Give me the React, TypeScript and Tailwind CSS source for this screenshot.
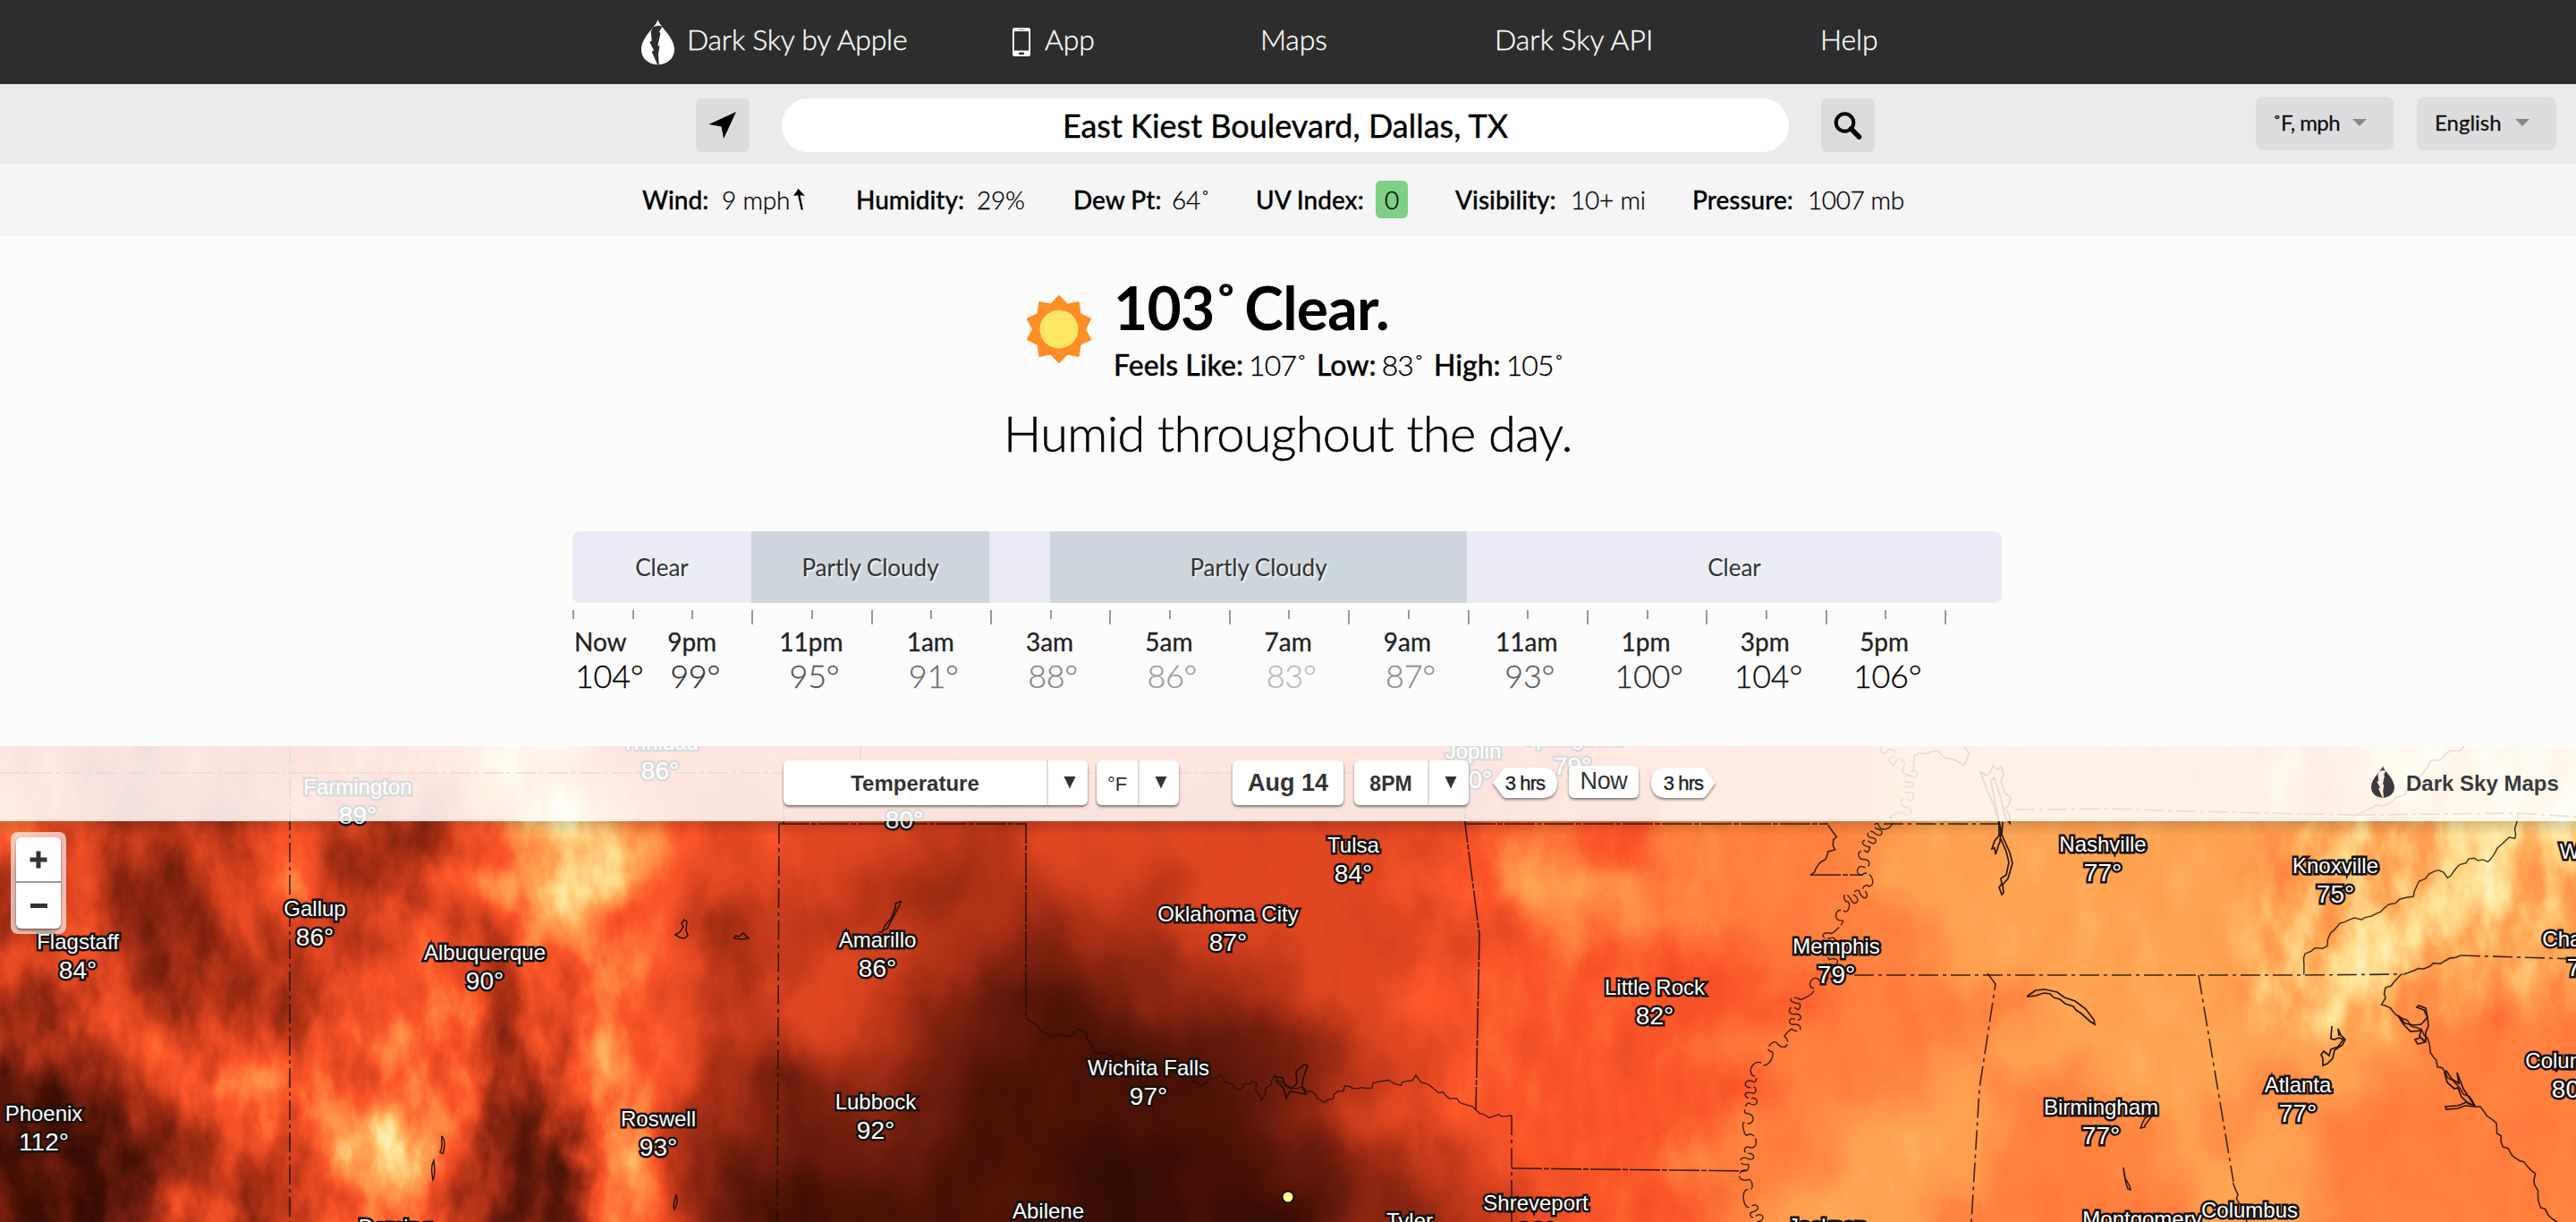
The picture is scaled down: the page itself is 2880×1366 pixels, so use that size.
import React from "react";

const CELL_W = 60;
const CELL_H = 44.4;
const MAP_TOP = 834;

// Temperature field: one character per cell, 0 (hottest) to 9 (coolest).
const FIELD = [
  "654655667986666" + "666666666666" + "66677777888" + "8888889999",
  "754446556897655" + "555455555555" + "56667777888" + "8888888999",
  "654456334699656" + "554455555555" + "67667777888" + "8888888899",
  "353357436899555" + "543445455556" + "68877777888" + "8888888998",
  "462345465586634" + "444434455555" + "56777777788" + "8888889988",
  "563344565467644" + "554323344555" + "66666677788" + "8888899888",
  "356334556466545" + "543212334556" + "66666667777" + "8888898777",
  "435655676357644" + "542211122355" + "66666777778" + "8888888777",
  "124586567357642" + "332111112345" + "66666677787" + "7888787777",
  "013366886237432" + "232111112355" + "66666778887" + "7787877777",
  "001344895218422" + "221110011234" + "56667778887" + "7788877777",
  "001535674217521" + "111110010133" + "45666788877" + "7778877777",
];

const TABLE_R = "0.20 0.29 0.41 0.55 0.71 0.87 0.985 1 1 1 1";
const TABLE_G = "0.045 0.07 0.105 0.15 0.205 0.275 0.335 0.50 0.645 0.87 1";
const TABLE_B = "0.014 0.024 0.045 0.068 0.09 0.13 0.16 0.245 0.325 0.56 0.86";

function Terrain() {
  const cells: React.ReactNode[] = [];
  FIELD.forEach((row, r) => {
    for (let c = -1; c <= 48; c++) {
      const col = Math.min(47, Math.max(0, c));
      const level = Math.round((Number(row[col]) / 10) * 255);
      let rough = 18;
      if (c < 12) rough = r > 5 ? 150 : 115;
      else if (c < 15) rough = 55;
      else if (c < 26) rough = 18;
      else if (c < 32) rough = 50;
      else if (c > 41 && r < 7) rough = 100;
      const top = r === 0 ? -40 : 0;
      const extra = r === 0 || r === FIELD.length - 1 ? 40 : 0;
      cells.push(
        <rect
          key={`${r}-${c}`}
          x={c * CELL_W}
          y={MAP_TOP + r * CELL_H + top}
          width={CELL_W + 1}
          height={CELL_H + 1 + extra}
          fill={`rgb(${level},${rough},0)`}
        />
      );
    }
  });
  return <g filter="url(#heat)">{cells}</g>;
}

type Pt = [number, number];

// Turns a coarse polyline into a winding line.
function meander(points: Pt[], amp: number, step: number): string {
  const out: string[] = [];
  let n = 0;
  for (let i = 0; i < points.length - 1; i++) {
    const [x0, y0] = points[i];
    const [x1, y1] = points[i + 1];
    const len = Math.hypot(x1 - x0, y1 - y0) || 1;
    const k = Math.max(1, Math.round(len / step));
    for (let j = 0; j < k; j++) {
      const t = j / k;
      const o = amp * (Math.sin(n * 1.9) + 0.6 * Math.sin(n * 3.7 + 1));
      const p = amp * 0.7 * Math.cos(n * 2.6);
      const nx = -(y1 - y0) / len;
      const ny = (x1 - x0) / len;
      const x = x0 + (x1 - x0) * t + nx * o + (p * (x1 - x0)) / len;
      const y = y0 + (y1 - y0) * t + ny * o + (p * (y1 - y0)) / len;
      out.push(`${x.toFixed(1)} ${y.toFixed(1)}`);
      n++;
    }
  }
  const last = points[points.length - 1];
  out.push(`${last[0]} ${last[1]}`);
  return "M" + out.join("L");
}

// A chain of uneven rounded loops along a coarse polyline, for a wide lowland river.
function oxbows(points: Pt[], amp: number, step: number): string {
  let d = `M${points[0][0]} ${points[0][1]}`;
  let side = 1;
  let n = 0;
  for (let i = 0; i < points.length - 1; i++) {
    const [x0, y0] = points[i];
    const [x1, y1] = points[i + 1];
    const len = Math.hypot(x1 - x0, y1 - y0) || 1;
    const ux = (x1 - x0) / len;
    const uy = (y1 - y0) / len;
    const k = Math.max(1, Math.round(len / (step * (1 + 0.45 * Math.sin(i * 2.1)))));
    const seg = len / k;
    for (let j = 0; j < k; j++) {
      const a = amp * (0.25 + 1.1 * Math.abs(Math.sin(n * 1.3 + 0.4)));
      const flare = 4 * Math.abs(Math.sin(n * 0.9));
      const sx = x0 + ux * seg * j;
      const sy = y0 + uy * seg * j;
      const ex = sx + ux * seg;
      const ey = sy + uy * seg;
      const c1x = sx - uy * a * side - ux * flare;
      const c1y = sy + ux * a * side - uy * flare;
      const c2x = ex - uy * a * side + ux * flare;
      const c2y = ey + ux * a * side + uy * flare;
      d += `C${c1x.toFixed(1)} ${c1y.toFixed(1)} ${c2x.toFixed(1)} ${c2y.toFixed(1)} ${ex.toFixed(1)} ${ey.toFixed(1)}`;
      side = -side;
      n++;
    }
  }
  return d;
}

const RED_RIVER: Pt[] = [
  [1147, 1137], [1171, 1157], [1200, 1158], [1206, 1149], [1217, 1160], [1223, 1176], [1252, 1180],
  [1332, 1205], [1341, 1215], [1361, 1202], [1384, 1218], [1401, 1208], [1410, 1230], [1424, 1203],
  [1441, 1215], [1462, 1218], [1481, 1233], [1504, 1215], [1527, 1217], [1547, 1207], [1565, 1213],
  [1582, 1204], [1613, 1223], [1651, 1240], [1659, 1248], [1690, 1247],
];

const MISSISSIPPI: Pt[] = [
  [2104, 834], [2118, 855], [2138, 862], [2136, 886], [2128, 910], [2100, 921], [2087, 952],
  [2082, 978], [2089, 991], [2064, 1008], [2060, 1029], [2046, 1043], [2046, 1078], [2028, 1105],
  [2011, 1116], [2004, 1151], [1979, 1175], [1961, 1203], [1957, 1234], [1950, 1255], [1957, 1283],
  [1952, 1308], [1955, 1330], [1957, 1349], [1964, 1366],
];

const NC_TN: Pt[] = [
  [2575, 1090], [2577, 1065], [2602, 1057], [2605, 1043], [2621, 1029], [2651, 1025], [2677, 1008],
  [2697, 1002], [2705, 985], [2727, 971], [2736, 982], [2751, 966], [2766, 959], [2781, 964],
  [2801, 938], [2811, 938], [2815, 909],
];

const SAVANNAH: Pt[] = [
  [2686, 1089], [2668, 1105], [2663, 1121], [2681, 1135], [2712, 1156], [2720, 1182], [2733, 1199],
  [2764, 1231], [2790, 1255], [2796, 1276], [2807, 1290], [2831, 1307], [2840, 1349], [2859, 1366],
];

function Borders() {
  return (
    <g fill="none" stroke="#1c0f08" strokeOpacity="0.85" strokeWidth="1.6">
      <g strokeDasharray="22 5 4 5">
        <path d="M324 834V1366M0 864H876M876 864H1638M962 834V864" />
        <path d="M871 921L869 1366" />
        <path d="M2253 905L2360 904L2450 907L2634 911M2106 921H2236M2634 911L2815 909L2880 913" />
        <path d="M2222 1088L2231 1100L2213 1217L2204 1366" />
        <path d="M2073 1090H2222L2458 1090L2575 1090L2686 1089" />
        <path d="M2458 1090L2497 1321" />
        <path d="M2751 1068L2880 1072" />
        <path d="M1690 1247V1366" />
      </g>
      <g strokeDasharray="34 2 6 2">
        <path d="M876 864V921M871 921H1147V1137M1638 864V921L1654 1045L1650 1240M1638 921H2044" />
        <path d="M1690 1306L1952 1309M2024 978H2082" />
      </g>
      <path d={meander(RED_RIVER, 1.6, 5)} strokeWidth="1.3" />
      <path d={oxbows(MISSISSIPPI, 8.5, 10)} strokeDasharray="26 3" strokeWidth="1.4" />
      <path d={meander(NC_TN, 1.2, 6)} strokeWidth="1.4" />
      <path d={meander(SAVANNAH, 1.5, 6)} />
      <path d={meander([[2686, 1089], [2716, 1080], [2751, 1068]], 1.2, 6)} />
      <path d={meander([[2634, 910], [2681, 893], [2720, 851], [2755, 834]], 2, 8)} />
      <path d={meander([[2044, 921], [2052, 935], [2049, 949], [2024, 978]], 1.6, 5)} />
      <path d={meander([[2138, 862], [2140, 845], [2160, 839], [2180, 848], [2195, 856], [2202, 842], [2196, 834]], 1.5, 8)} />
      <path d={meander([[2497, 1321], [2502, 1340], [2512, 1366]], 1.6, 5)} />
      {/* Lakes */}
      <g strokeWidth="1.7" strokeOpacity="0.95">
        <path d="M2214 862l6 5 5-3 3-8 5 4 5-3 2 10-3 6 4 13 7 6-2 8-4 3 5 9v8l-5-6-4-17-5-18-4-10-3 5 6 30 5 24-1 14M2214 862l7 20 8 18 6 20 0 14-5 6-3 9 3-1 1 7 3-9 3-8 6 14 3 12-3 14-6 4 1 6-3 4 3 8 2-2-1-9 6-7 5-17-3-12-9-20 1-14" />
        <path d="M2267 1113l9-6 10-1 14 3 8 6 12 4 12 9 9 12 1 5-5-3-10-9-6-4-3-4-9-3-6-5-7-2-4-4-7-1-9 3-9 1z" />
        <path d="M2607 1147l-1 14 4 1 5-2 5 2-6 8-8 3-2 7-6-5-3 4 2 4v8l5-2 6-6 2-9 9-6 3-6-5-5-3-7 1 8" />
        <path d="M2405 1246l-7 4-3 6-2 5 5-1 0-2 9-12M2374 1305l2 12 5 9 1 4-3-1-2-6-2-9zM2842 1193l4 3 8-2 4 4 4-5" strokeWidth="1.5" />
        <path d="M2681 1135l8 9 10 2 8-1 7-8-2-10-8-3-2 2 8 3 4 8 1 10-3 7v10l-6-4-6 2 3 5 8-2-6-7 2-6-12 1-8-8z" />
        <path d="M2733 1199l3 11 8 7 4-1 4 10 8 8 6 1-12-18-7-18 2 12-8-5-6-9zM2766 1236l-8-4-10 4-14 1 1 3 13-1 8-3 11 1" />
        <path d="M1008 1007l-7 3 0 5-5 12-6 7-4 8-4 0M1008 1007l-6 12-7 13-3 6-6 3" strokeWidth="1.6" />
        <path d="M765 1028l3 2-1 10 2 6-4 3-5-1-5-3 5-3 4-6-2-4zM831 1043l6 6-9 1-7-1 1-3 4 1z" strokeWidth="1.5" />
        <path d="M494 1270c5 6 3 14 1 20M494 1270c-1 6 2 12-2 18l3 2M485 1297c-4 8-2 15-1 22 3-6 2-14 1-22zM756 1336c3 6 0 12-2 16-2-5 0-11 2-16z" strokeWidth="1.5" />
        <path d="M1424 1203l10 2 2 8 8 4 6-6-1-13 9-8 4 1-5 14-1 9 4 9-12-2-6-1-4 8-3-12-9-8" />
        <path d="M96 874l6-18 10 9 8-14 8 3 6-8 14-3 10-8 8 4 10-6 6 4" strokeWidth="1" strokeOpacity="0.5" />
      </g>
    </g>
  );
}

interface City {
  name: string;
  temp: string;
  x: number;
  y: number;
}

const CITIES: City[] = [
  { name: "Gallup", temp: "86°", x: 352, y: 1024 },
  { name: "Flagstaff", temp: "84°", x: 87, y: 1061 },
  { name: "Phoenix", temp: "112°", x: 49, y: 1253 },
  { name: "Albuquerque", temp: "90°", x: 542, y: 1073 },
  { name: "Farmington", temp: "89°", x: 400, y: 888 },
  { name: "Trinidad", temp: "86°", x: 738, y: 838 },
  { name: "Roswell", temp: "93°", x: 736, y: 1259 },
  { name: "Deming", temp: "91°", x: 442, y: 1380 },
  { name: "Guymon", temp: "80°", x: 1011, y: 893 },
  { name: "Tulsa", temp: "84°", x: 1513, y: 953 },
  { name: "Oklahoma City", temp: "87°", x: 1373, y: 1030 },
  { name: "Amarillo", temp: "86°", x: 981, y: 1059 },
  { name: "Lubbock", temp: "92°", x: 979, y: 1240 },
  { name: "Wichita Falls", temp: "97°", x: 1284, y: 1202 },
  { name: "Abilene", temp: "97°", x: 1172, y: 1362 },
  { name: "Tyler", temp: "90°", x: 1576, y: 1373 },
  { name: "Shreveport", temp: "88°", x: 1717, y: 1353 },
  { name: "Joplin", temp: "80°", x: 1647, y: 848 },
  { name: "Springfield", temp: "79°", x: 1758, y: 833 },
  { name: "Little Rock", temp: "82°", x: 1850, y: 1112 },
  { name: "Memphis", temp: "79°", x: 2053, y: 1066 },
  { name: "Jackson", temp: "80°", x: 2043, y: 1379 },
  { name: "Nashville", temp: "77°", x: 2351, y: 952 },
  { name: "Knoxville", temp: "75°", x: 2611, y: 976 },
  { name: "Birmingham", temp: "77°", x: 2349, y: 1246 },
  { name: "Atlanta", temp: "77°", x: 2569, y: 1221 },
  { name: "Montgomery", temp: "79°", x: 2395, y: 1371 },
  { name: "Columbus", temp: "79°", x: 2515, y: 1361 },
  { name: "Columbia", temp: "80°", x: 2874, y: 1194 },
  { name: "Charlotte", temp: "78°", x: 2891, y: 1058 },
  { name: "Winston-Salem", temp: "75°", x: 2943, y: 960 },
];

function CityLabel({ city }: { city: City }) {
  return (
    <div
      className="absolute flex w-[200px] -translate-x-1/2 flex-col items-center whitespace-nowrap text-white [-webkit-text-stroke:5px_#17110e] [paint-order:stroke_fill]"
      style={{ left: city.x, top: city.y - 24.3 - MAP_TOP }}
    >
      <span className="text-[24px] leading-[32px]">{city.name}</span>
      <span className="text-[28px] leading-[31px]">{city.temp}</span>
    </div>
  );
}

function Drop({ className, fill, bolt }: { className: string; fill: string; bolt: string }) {
  return (
    <svg viewBox="0 0 38 52" className={className}>
      <path d="M19 0C20 7 38 20 38 34.500C38 45 29.500 52 19 52S0 45 0 34.500C0 20 18 7 19 0Z" fill={fill} />
      <path d="M13 9.500C17 7 20.500 7 24 8L20.500 14.500L22 16L19 29.500L21 31L19.500 40L20.300 52L18.300 51.500L12 37L14.500 35.500L9.500 26L12 24.500L11 14Z" fill={bolt} />
    </svg>
  );
}

function PhoneIcon() {
  return (
    <svg viewBox="0 0 20 32" className="mr-4 h-8 w-5">
      <rect width="20" height="32" rx="2.500" fill="#fff" />
      <rect x="1.800" y="4" width="16.400" height="21.500" fill="#2d2d2d" />
      <rect x="6.500" y="1.500" width="7" height="1" fill="#777" />
      <rect x="7" y="27.500" width="6" height="2.500" rx="0.800" fill="#2d2d2d" />
    </svg>
  );
}

function Header() {
  return (
    <nav className="flex h-[94px] items-center bg-[#2d2d2d] pl-[717px] text-[32px] font-light tracking-[-0.15px] text-white [-webkit-text-stroke:0.3px_#fff]">
      <a className="flex w-[415px] items-center">
        <Drop className="mr-[14px] h-[52px] w-[37px]" fill="#fff" bolt="#2d2d2d" />
        <span className="pb-1.5 tracking-[-0.25px]">Dark Sky by Apple</span>
      </a>
      <a className="flex w-[277px] items-center">
        <PhoneIcon />
        <span className="pb-1.5">App</span>
      </a>
      <a className="w-[262px] pb-1.5">Maps</a>
      <a className="w-[364px] pb-1.5 tracking-normal">Dark Sky API</a>
      <a className="pb-1.5">Help</a>
    </nav>
  );
}

function Caret() {
  return <span className="h-0 w-0 border-x-[8px] border-t-[8px] border-x-transparent border-t-[#888888]" />;
}

function SearchBar() {
  return (
    <div className="flex h-[90px] items-start bg-[#ebebeb] pl-[778px]">
      <button className="mt-4 flex h-[60px] w-[60px] items-center justify-center rounded-md bg-[#dbdddc]">
        <svg viewBox="0 0 32 32" className="h-8 w-8">
          <path d="M31 1L0.500 15L14.500 17.500L17 31Z" fill="#000" />
        </svg>
      </button>
      <div className="mt-4 ml-9 flex h-[60px] w-[1126px] items-center justify-center rounded-full bg-white text-[36px] [-webkit-text-stroke:0.4px_#000]">
        East Kiest Boulevard, Dallas, TX
      </div>
      <button className="mt-4 ml-9 flex h-[60px] w-[60px] items-center justify-center rounded-md bg-[#dbdddc]">
        <svg viewBox="0 0 32 32" className="h-8 w-8">
          <circle cx="12.500" cy="13" r="9.800" fill="none" stroke="#000" strokeWidth="4" />
          <path d="M19.500 20L28.500 29" stroke="#000" strokeWidth="5.500" strokeLinecap="round" />
        </svg>
      </button>
      <button className="mt-3.5 ml-[426px] flex h-[60px] w-[154px] items-center gap-[14px] rounded-lg bg-[#dddddf] pb-0.5 pl-[19px] text-[24px] tracking-[-0.6px] text-[#111] [-webkit-text-stroke:0.3px_#111]">
        ˚F, mph <Caret />
      </button>
      <button className="mt-3.5 ml-[26px] flex h-[60px] w-[156px] items-center gap-[15px] rounded-lg bg-[#dddddf] pb-0.5 pl-5 text-[24px] text-[#111] [-webkit-text-stroke:0.3px_#111]">
        English <Caret />
      </button>
    </div>
  );
}

function Details() {
  return (
    <div className="flex h-[80px] items-center bg-[#f5f5f5] pb-0.5 pl-[718px] text-[28px] font-light tracking-[-0.2px] text-black [-webkit-text-stroke:0.3px_#000]">
      <div className="flex w-[239px] items-center">
        <span className="w-[89px] font-medium tracking-normal">Wind:</span>9 mph
        <svg viewBox="0 0 14 24" className="ml-1 h-6 w-3.5">
          <path d="M5.500 0L13 8L7.500 7.200L11 23.500H8.500L5.200 7.200L0 8Z" fill="#000" />
        </svg>
      </div>
      <div className="flex w-[243px]">
        <span className="w-[135px] font-medium tracking-normal">Humidity:</span>29%
      </div>
      <div className="flex w-[204px]">
        <span className="w-[110px] font-medium tracking-normal">Dew Pt:</span>64˚
      </div>
      <div className="flex w-[223px] items-center">
        <span className="w-[134px] font-medium tracking-normal">UV Index:</span>
        <span className="flex h-[42px] w-9 items-center justify-center rounded-md bg-[#7fd084]">0</span>
      </div>
      <div className="flex w-[265px]">
        <span className="w-[129px] font-medium tracking-normal">Visibility:</span>10+ mi
      </div>
      <div className="flex tracking-[-0.4px]">
        <span className="w-[129px] font-medium tracking-normal">Pressure:</span>1007 mb
      </div>
    </div>
  );
}

function SunIcon() {
  const pts: string[] = [];
  for (let i = 0; i < 20; i++) {
    const a = (i / 20) * Math.PI * 2 - Math.PI / 2;
    const rad = i % 2 === 0 ? 37 : 29;
    pts.push(`${(38 + rad * Math.cos(a)).toFixed(2)},${(38 + rad * Math.sin(a)).toFixed(2)}`);
  }
  return (
    <svg viewBox="0 0 76 76" className="h-[76px] w-[76px]">
      <polygon points={pts.join(" ")} fill="#ff8e27" stroke="#ff8e27" strokeWidth="2" strokeLinejoin="round" />
      <circle cx="38" cy="38" r="21.500" fill="#ffe566" />
    </svg>
  );
}

function Current() {
  return (
    <section className="flex h-[330px] flex-col text-black">
      <div className="flex pt-[42px] pl-[1146px]">
        <div className="mt-[24px] w-[99px]">
          <SunIcon />
        </div>
        <div className="flex flex-col">
          <div className="text-[66px] leading-[76px] font-bold tracking-[-0.8px]">
            103˚<span className="-ml-[7px]"> Clear.</span>
          </div>
          <div className="flex gap-[11px] text-[32px] leading-[52px] font-light [-webkit-text-stroke:0.3px_#000]">
            <span><span className="font-medium">Feels Like:</span><span className="ml-[6px] tracking-[-0.9px]">107˚</span></span>
            <span><span className="font-medium">Low:</span><span className="ml-[6px] tracking-[-0.9px]">83˚</span></span>
            <span><span className="font-medium">High:</span><span className="ml-[6px] tracking-[-0.9px]">105˚</span></span>
          </div>
        </div>
      </div>
      <div className="mt-[14px] text-center text-[56px] leading-[72px] font-light tracking-[-0.7px] [-webkit-text-stroke:0.5px_#000]">Humid throughout the day.</div>
    </section>
  );
}

const HOURS: [string, string, string][] = [
  ["9pm", "99°", "text-[#333]"],
  ["11pm", "95°", "text-[#555]"],
  ["1am", "91°", "text-[#6e6e6e]"],
  ["3am", "88°", "text-[#888]"],
  ["5am", "86°", "text-[#9c9c9c]"],
  ["7am", "83°", "text-[#bbb]"],
  ["9am", "87°", "text-[#8e8e8e]"],
  ["11am", "93°", "text-[#5e5e5e]"],
  ["1pm", "100°", "text-[#2a2a2a]"],
  ["3pm", "104°", "text-[#0c0c0c]"],
  ["5pm", "106°", "text-black"],
];

function Timeline() {
  return (
    <section className="ml-[640px] h-[240px] w-[1598px]">
      <div className="flex h-20 overflow-hidden rounded-lg bg-[#eaebf4] text-[26px] text-[#333] [text-shadow:2px_2px_0_rgba(255,255,255,0.6)]">
        <div className="flex w-[200px] items-center justify-center">Clear</div>
        <div className="flex w-[266px] items-center justify-center bg-[#ced5dc]">Partly Cloudy</div>
        <div className="w-[68px]" />
        <div className="flex w-[466px] items-center justify-center bg-[#ced5dc]">Partly Cloudy</div>
        <div className="flex flex-1 items-center justify-center">Clear</div>
      </div>
      <div className="mt-2 flex h-4 w-[1601px]">
        {Array.from({ length: 24 }, (_, i) => (
          <div key={i} className="flex-1">
            <div className={i > 2 && i % 2 === 1 ? "h-4 w-0.5 bg-[#999]" : "h-2.5 w-0.5 bg-[#999]"} />
          </div>
        ))}
      </div>
      <div className="flex w-[1536px] pt-0.5">
        <div className="w-[67px] pl-[2px] whitespace-nowrap">
          <div className="text-[28px] leading-[34px] text-[#222] [-webkit-text-stroke:0.3px_#222]">Now</div>
          <div className="pl-px text-[36px] leading-[42px] font-light tracking-[-0.3px] text-black [-webkit-text-stroke:0.3px_currentColor]">104°</div>
        </div>
        {HOURS.map(([hour, temp, tone]) => (
          <div key={hour} className="w-[133.300px] text-center">
            <div className="text-[28px] leading-[34px] text-[#222] [-webkit-text-stroke:0.3px_#222]">{hour}</div>
            <div className={`pl-[7px] text-[36px] leading-[42px] font-light tracking-[-0.3px] [-webkit-text-stroke:0.3px_currentColor] ${tone}`}>{temp}</div>
          </div>
        ))}
      </div>
    </section>
  );
}

const BUTTON_SHADOW = "shadow-[0_2px_3px_rgba(0,0,0,0.5)]";

function Select({ className, label, labelClass }: { className: string; label: string; labelClass: string }) {
  return (
    <div className={`flex h-[50px] rounded-md bg-white text-[#333] ${BUTTON_SHADOW} ${className}`}>
      <span className={`flex flex-1 items-center justify-center border-r-2 border-[#ddd] pt-0.5 ${labelClass}`}>{label}</span>
      <span className="flex w-[44px] items-center justify-center pl-1">
        <svg viewBox="0 0 14 14" className="h-3.5 w-3.5">
          <path d="M0.500 0H13.500L7 13.500Z" fill="#333" />
        </svg>
      </span>
    </div>
  );
}

function StepButton({ flip }: { flip?: boolean }) {
  return (
    <div className="relative h-[34px] w-[72px]">
      <svg viewBox="0 0 72 34" className={`absolute inset-0 h-full w-full overflow-visible drop-shadow-[0_2px_1.500px_rgba(0,0,0,0.45)] ${flip ? "-scale-x-100" : ""}`}>
        <path d="M0 17L11 2Q12.500 0 15 0H56Q72 1 72 17T56 34H15Q12.500 34 11 32Z" fill="#fff" />
      </svg>
      <span className="relative flex h-full items-center justify-center text-[22px] tracking-[-0.9px] text-[#222] [-webkit-text-stroke:0.4px_#222]">3 hrs</span>
    </div>
  );
}

function MapToolbar() {
  return (
    <div className="absolute inset-x-0 top-0 flex h-[84px] items-start bg-white/85 pl-[876px]">
      <Select className="mt-4 w-[340px]" label="Temperature" labelClass="text-[24px] font-bold" />
      <Select className="mt-4 ml-2.5 w-[92px]" label="°F" labelClass="text-[22px]" />
      <div className={`mt-4 ml-[60px] flex h-[50px] w-[124px] items-center justify-center rounded-md bg-white text-[27px] font-bold text-[#333] ${BUTTON_SHADOW}`}>
        Aug 14
      </div>
      <Select className="mt-4 ml-3 w-[128px]" label="8PM" labelClass="text-[23px] font-bold" />
      <div className="mt-6 ml-[27px]">
        <StepButton />
      </div>
      <div className={`mt-[22px] ml-[13px] flex h-9 w-[78px] items-center justify-center rounded-md bg-white pb-0.5 text-[27px] tracking-[-0.3px] text-[#333] ${BUTTON_SHADOW}`}>
        Now
      </div>
      <div className="mt-6 ml-3.5">
        <StepButton flip />
      </div>
      <div className="mt-5 ml-[733px] flex items-center">
        <Drop className="h-9 w-[26px]" fill="#3a3a3c" bolt="#fdeee3" />
        <span className="ml-[13px] pt-1 text-[24px] font-bold whitespace-nowrap text-[#3a3a3c]">Dark Sky Maps</span>
      </div>
    </div>
  );
}

function ZoomControl() {
  return (
    <div className="absolute top-[96px] left-3 rounded-lg bg-white/65 p-[6px]">
      <div className={`flex flex-col overflow-hidden rounded-md bg-white ${BUTTON_SHADOW}`}>
        <div className="flex h-[51px] w-[50px] items-center justify-center border-b-2 border-[#999]">
          <svg viewBox="0 0 20 20" className="h-5 w-5">
            <path d="M0.500 10H19.500M10 0.500V19.500" stroke="#333" strokeWidth="5" />
          </svg>
        </div>
        <div className="flex h-[51px] w-[50px] items-center justify-center">
          <span className="h-[5px] w-[19px] bg-[#333]" />
        </div>
      </div>
    </div>
  );
}

function WeatherMap() {
  return (
    <section className="relative h-[532px] overflow-hidden bg-[#ff7a3a] font-['Liberation_Sans',Arial,sans-serif]">
      <svg viewBox="0 834 2880 532" className="block h-[532px] w-full">
        <defs>
          <filter id="heat" filterUnits="userSpaceOnUse" x="-60" y="794" width="3000" height="612" colorInterpolationFilters="sRGB">
            <feGaussianBlur in="SourceGraphic" stdDeviation="21 17" result="soft" />
            <feTurbulence type="fractalNoise" baseFrequency="0.013 0.010" numOctaves="5" seed="8" result="warp" />
            <feDisplacementMap in="soft" in2="warp" scale="55" xChannelSelector="R" yChannelSelector="G" result="bent" />
            <feColorMatrix in="bent" type="matrix" values="1 0 0 0 0  1 0 0 0 0  1 0 0 0 0  0 0 0 0 1" result="field" />
            <feColorMatrix in="bent" type="matrix" values="0 1 0 0 0  0 1 0 0 0  0 1 0 0 0  0 0 0 0 1" result="amp" />
            <feTurbulence type="fractalNoise" baseFrequency="0.026 0.013" numOctaves="6" seed="21" result="t" />
            <feColorMatrix in="t" type="matrix" values="1.6 0 0 0 -0.3  1.6 0 0 0 -0.3  1.6 0 0 0 -0.3  0 0 0 0 1" result="noise" />
            <feComposite in="amp" in2="noise" operator="arithmetic" k1="1" k2="0" k3="0" k4="0" result="prod" />
            <feComposite in="field" in2="amp" operator="arithmetic" k1="0" k2="1" k3="-0.21" k4="0" result="low" />
            <feComposite in="low" in2="prod" operator="arithmetic" k1="0" k2="1" k3="0.46" k4="0" result="sum" />
            <feComponentTransfer in="sum">
              <feFuncR type="table" tableValues={TABLE_R} />
              <feFuncG type="table" tableValues={TABLE_G} />
              <feFuncB type="table" tableValues={TABLE_B} />
              <feFuncA type="linear" slope="0" intercept="1" />
            </feComponentTransfer>
          </filter>
        </defs>
        <Terrain />
        <Borders />
        <circle cx="1440" cy="1338" r="6.500" fill="#ffff8c" stroke="#1a0a04" strokeWidth="2" />
      </svg>
      {CITIES.map((city) => (
        <CityLabel key={city.name} city={city} />
      ))}
      <div className="absolute inset-x-0 top-[84px] h-4 bg-gradient-to-b from-black/15 to-transparent" />
      <MapToolbar />
      <ZoomControl />
    </section>
  );
}

export default function App() {
  return (
    <div className="h-[1366px] w-[2880px] overflow-hidden bg-[#fcfcfc] font-['Lato',sans-serif]">
      <Header />
      <SearchBar />
      <Details />
      <Current />
      <Timeline />
      <WeatherMap />
    </div>
  );
}
